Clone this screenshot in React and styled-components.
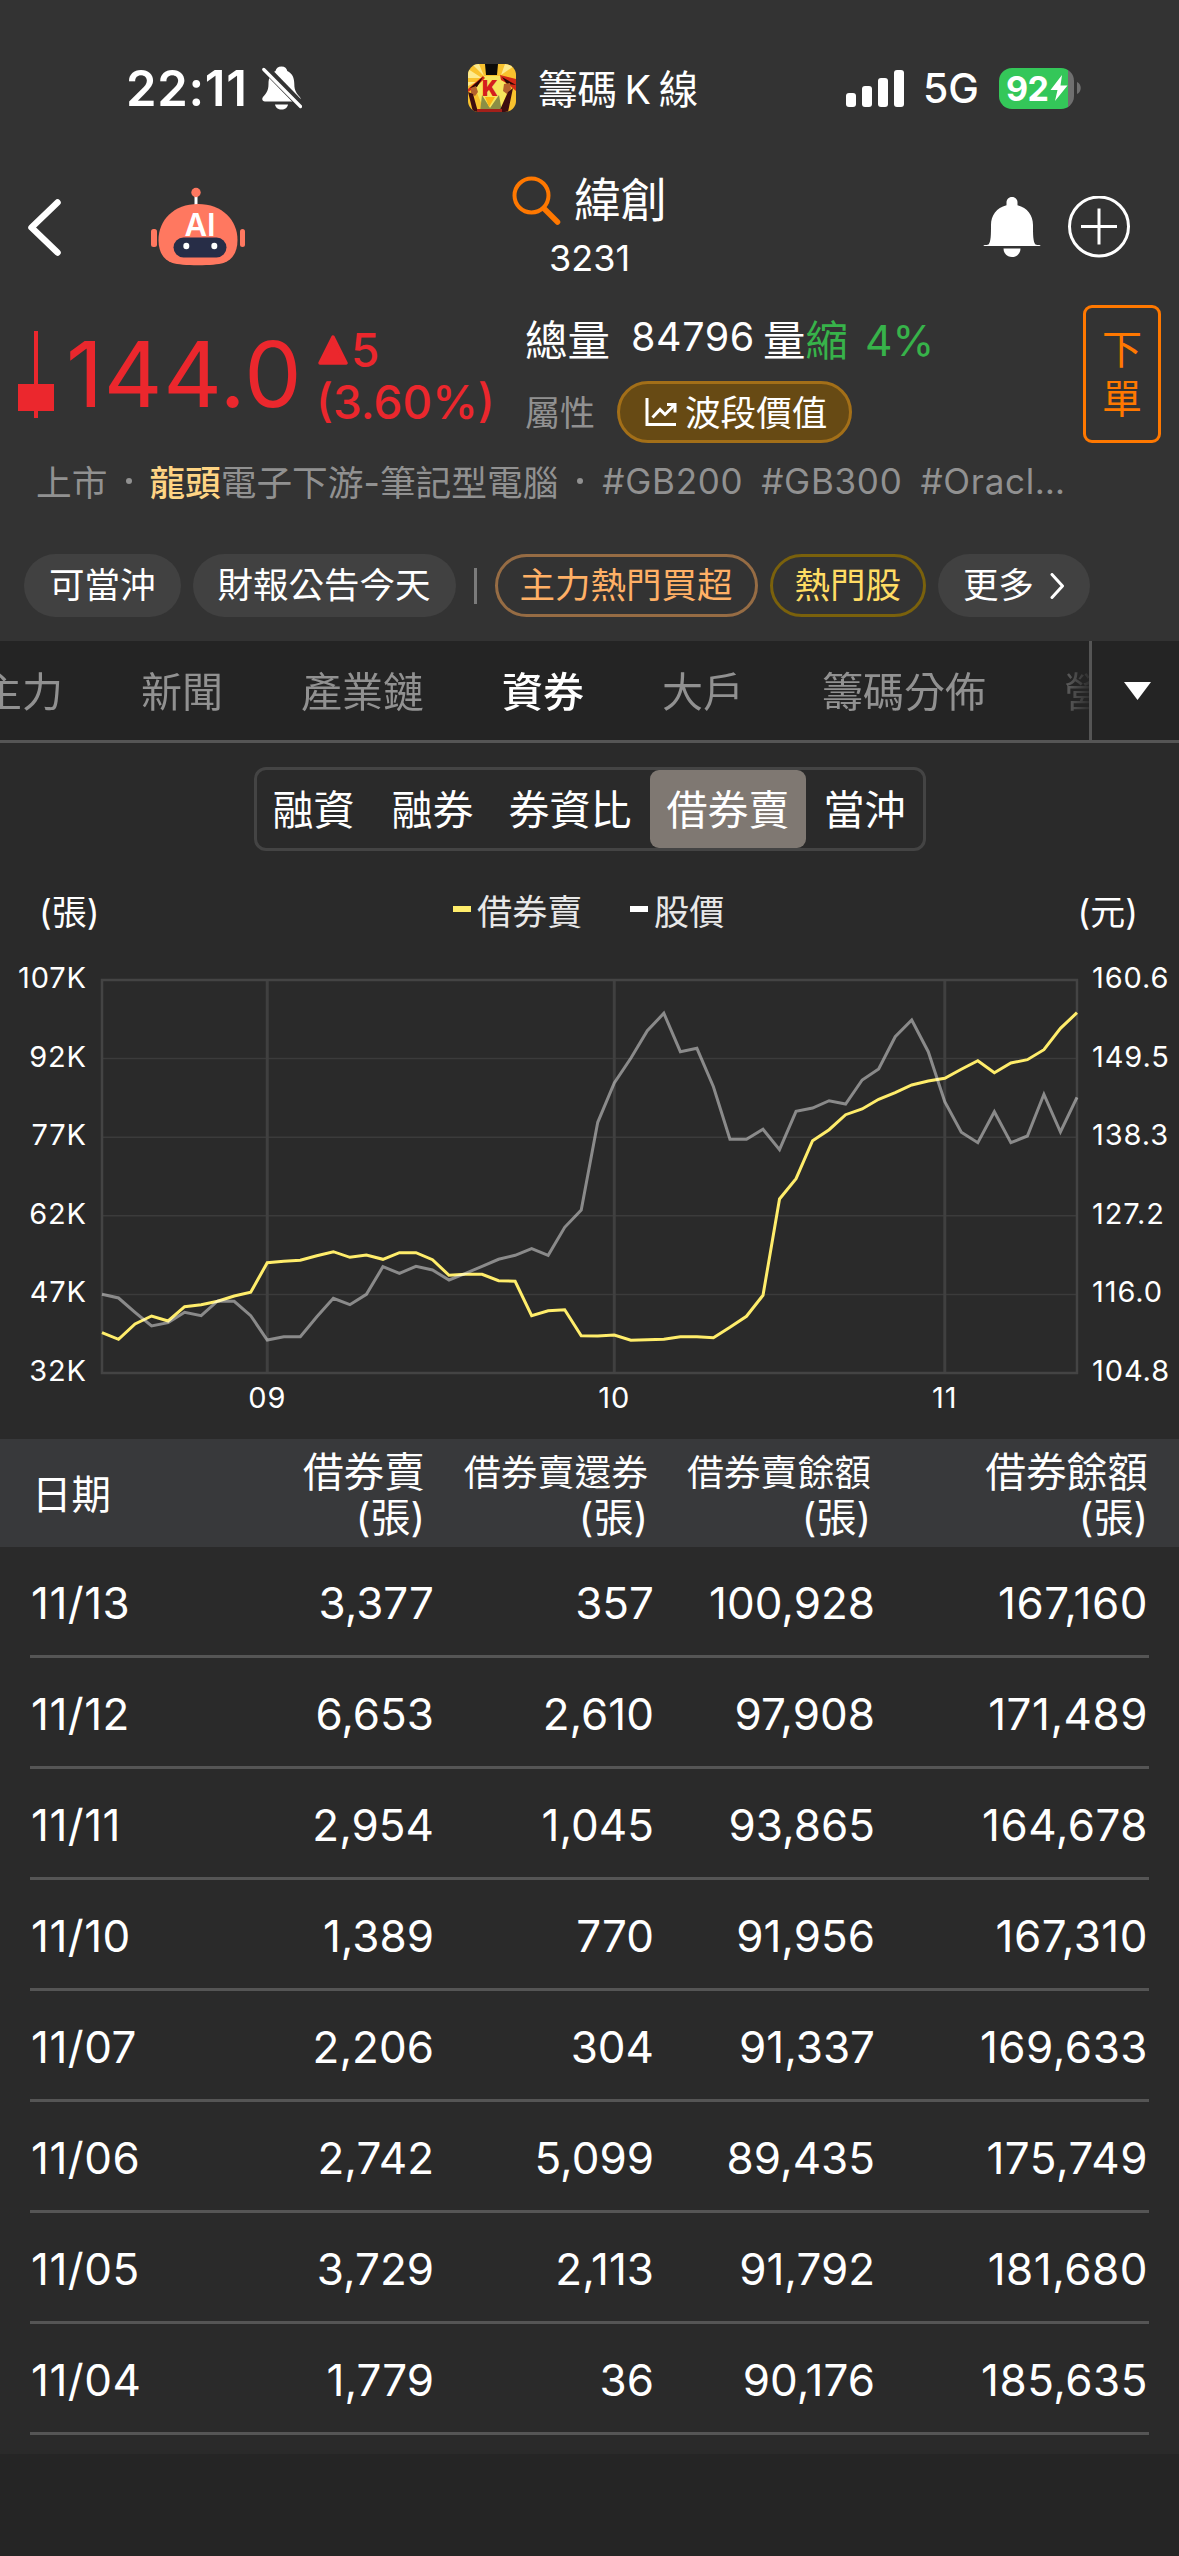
import styled, { createGlobalStyle } from "styled-components";

const GlobalStyle = createGlobalStyle`
    *{
        box-sizing: border-box;
    }

    body{
        margin: 0;
        background-color: #2a2a2a;
        color: #fff;
        font-family: Inter, "Noto Sans CJK TC", sans-serif;
        font-weight: 400;
        white-space: nowrap;
    }

    svg{
        display: block;
        flex-shrink: 0;
    }
`;

const Screen = styled.div`
    width: 1179px;
    height: 2556px;
    display: flex;
    flex-direction: column;
    overflow: hidden;
`;

const Header = styled.header`
    height: 641px;
    background-color: #333;
`;

/* ---------- status bar ---------- */

const StatusBar = styled.div`
    height: 176px;
    padding: 0 98px 0 126px;
    display: grid;
    grid-template-columns: 342px 378px 1fr;
    align-items: center;
`;

const StatusGroup = styled.div`
    display: flex;
    align-items: center;
    gap: ${({ $gap }) => $gap}px;
`;

const Clock = styled.span`
    width: 122px;
    font-size: 49px;
    font-weight: 600;
    letter-spacing: 0.7px;
`;

const AppName = styled.span`
    padding-bottom: 4px;
    font-size: 39.5px;
    word-spacing: -3.5px;
`;

const Network = styled.span`
    width: 55px;
    margin-left: -1px;
    margin-right: 1px;
    font-size: 41px;
    font-weight: 500;
    letter-spacing: 0;
`;

const Battery = styled.div`
    width: 75px;
    height: 41px;
    padding-left: 7px;
    display: flex;
    align-items: center;
    gap: 1px;
    border-radius: 13px;
    background: linear-gradient(to right, #34c759 69px, #6f6f6f 69px);
    font-size: 34px;
    font-weight: 700;
    letter-spacing: -0.5px;
`;

/* ---------- navigation ---------- */

const Nav = styled.nav`
    height: 114px;
    padding: 0 48px 0 28px;
    display: grid;
    grid-template-columns: 300px 1fr 300px;
    align-items: flex-start;
`;

const NavSide = styled.div`
    height: 102px;
    display: flex;
    align-items: center;
    justify-content: ${({ $end }) => ($end ? "flex-end" : "flex-start")};
    gap: ${({ $gap }) => $gap}px;
`;

const StockTitle = styled.div`
    padding-left: 20px;
    display: flex;
    flex-direction: column;
    align-items: center;
    gap: 10px;

    h1{
        margin: 0;
        height: 48px;
        display: flex;
        align-items: center;
        gap: 13px;
        font-size: 46.5px;
        font-weight: 400;
        line-height: 48px;
    }

    p{
        margin: 0;
        font-size: 36px;
        line-height: 48px;
    }
`;

/* ---------- quote ---------- */

const Quote = styled.section`
    height: 163px;
    padding: 0 18px;
    display: grid;
    grid-template-columns: 36px 264px 207px 1fr 78px;
    align-items: flex-start;
    color: #eb272d;
`;

const Candle = styled.svg`
    margin-top: 41px;
`;

const Price = styled.div`
    padding: 39px 0 0 12px;
    font-size: 91px;
    line-height: 91px;
    letter-spacing: 0.7px;
`;

const Change = styled.div`
    padding-top: 34px;
    display: flex;
    flex-direction: column;
    font-size: 46px;
    font-weight: 500;
    line-height: 52px;

    div{
        margin-left: -2px;
        display: flex;
        align-items: center;
    }

    div:first-child{
        margin-left: 0;
        gap: 3px;
    }
`;

const QuoteInfo = styled.div`
    padding-top: 20px;
    display: flex;
    flex-direction: column;
    gap: 11px;
    color: #fff;
`;

const Volume = styled.div`
    height: 60px;
    padding-bottom: 6px;
    display: flex;
    align-items: center;
    font-size: 42.5px;

    strong{
        width: 132px;
        margin-left: 21px;
        font-size: 39.5px;
        font-weight: 400;
        letter-spacing: 0.6px;
    }

    em{
        color: #37b34a;
        font-style: normal;
        word-spacing: 5px;
    }
`;

const Attribute = styled.div`
    display: flex;
    align-items: center;
    gap: 22px;
    color: #919191;
    font-size: 35px;

    span{
        padding-bottom: 4px;
    }
`;

const StyleBadge = styled.div`
    height: 62px;
    padding: 0 22px 0 25px;
    display: flex;
    align-items: center;
    gap: 8px;
    border: 3px solid #a36f18;
    border-radius: 31px;
    background-color: #674a14;
    color: #fff;
    font-size: 35.6px;
`;

const OrderButton = styled.button`
    height: 138px;
    margin: 15px 0 0;
    padding: 0 16px;
    border: 3px solid #ff7800;
    border-radius: 9px;
    background: none;
    color: #ff7800;
    font: inherit;
    font-size: 40px;
    line-height: 49px;
    white-space: normal;
`;

const Topics = styled.div`
    height: 58px;
    padding: 0 0 3px 36px;
    display: flex;
    align-items: center;
    color: #919191;
    font-size: 35.7px;

    b{
        color: #ffd584;
        font-weight: 500;
    }

    i{
        width: 6px;
        height: 6px;
        margin: 0 17px 0 19px;
        border-radius: 50%;
        background-color: #919191;
    }

    span{
        margin-right: 18px;
        font-size: 35px;
        letter-spacing: 0.7px;
    }

    i + span{
        margin-left: 2px;
    }
`;

/* ---------- chips ---------- */

const Chips = styled.div`
    padding: 43px 24px 0;
    display: flex;
    align-items: center;
    gap: 12px;
`;

const Chip = styled.button`
    height: 63px;
    padding: 0 ${({ $line }) => ($line ? 22 : 25)}px;
    display: flex;
    align-items: center;
    gap: 16px;
    border: ${({ $line }) => ($line ? `3px solid ${$line}` : "none")};
    border-radius: 32px;
    background-color: ${({ $line }) => ($line ? "transparent" : "#414141")};
    color: ${({ $color }) => $color || "#fff"};
    font: inherit;
    font-size: 35.5px;
    line-height: 57px;
`;

const ChipDivider = styled.span`
    width: 3px;
    height: 36px;
    margin: 0 6px;
    background-color: #7b7b7b;
`;

/* ---------- tabs ---------- */

const TabBar = styled.div`
    height: 102px;
    display: flex;
    border-bottom: 3px solid #555;
    background-color: #242424;
`;

const TabList = styled.div`
    width: 1089px;
    padding-bottom: 3px;
    display: flex;
    align-items: center;
    gap: 78px;
    overflow: hidden;
    mask-image: linear-gradient(to right, #000 1040px, rgba(0,0,0,0.1) 1089px);
`;

const Tab = styled.span`
    flex-shrink: 0;
    color: ${({ $active }) => ($active ? "#fff" : "#919191")};
    font-size: 41px;
    font-weight: ${({ $active }) => ($active ? 500 : 400)};

    &:first-child{
        margin-left: -19px;
    }
`;

const TabMore = styled.button`
    flex: 1;
    padding: 0 0 0 4px;
    display: flex;
    align-items: center;
    justify-content: center;
    border: none;
    border-left: 3px solid #555;
    background: none;
`;

/* ---------- segmented control ---------- */

const Segments = styled.div`
    width: 672px;
    height: 84px;
    margin: 24px 0 0 254px;
    display: grid;
    grid-template-columns: 113px 125px 155px 156px 1fr;
    border: 3px solid #444;
    border-radius: 12px;
`;

const Segment = styled.button`
    padding: 0 0 5px;
    border: none;
    border-radius: 9px;
    background-color: ${({ $active }) => ($active ? "#7f7872" : "transparent")};
    color: #fff;
    font: inherit;
    font-size: 41px;

    &:nth-child(3){
        padding-right: 5px;
    }
`;

/* ---------- chart ---------- */

const Legend = styled.div`
    height: 120px;
    padding: 0 41px 4px 39px;
    display: grid;
    grid-template-columns: 414px 177px 1fr auto;
    align-items: center;
    font-size: 35px;
`;

const LegendItem = styled.span`
    display: flex;
    align-items: center;
    gap: 6px;
    color: #e8e8e8;
    font-size: 35.2px;

    &::before{
        content: "";
        width: 18px;
        height: 6px;
        background-color: ${({ $color }) => $color};
    }
`;

const Chart = styled.svg`
    overflow: visible;
    font-size: 29px;
    letter-spacing: 0.9px;

    text{
        fill: #fff;
    }

    polyline{
        fill: none;
        stroke-width: 3;
    }
`;

/* ---------- table ---------- */

const TableHead = styled.div`
    height: 108px;
    padding: 0 31px 0 32px;
    display: grid;
    grid-template-columns: 154px 239px 223px 223px 1fr;
    align-items: center;
    background-color: #38393b;
`;

const DateHead = styled.div`
    padding-bottom: 4px;
    font-size: 39.5px;
`;

const HeadCell = styled.div`
    padding-top: 4px;
    display: flex;
    flex-direction: column;
    align-items: flex-end;
    font-size: 40px;
    line-height: 45px;

    span:first-child{
        font-size: ${({ $small }) => ($small ? 36.8 : 40.7)}px;
    }
`;

const Row = styled.div`
    height: 111px;
    margin: 0 30px;
    padding: 3px 1px 0 1px;
    display: grid;
    grid-template-columns: 180px 223px 220px 221px 1fr;
    align-items: center;
    border-bottom: 3px solid #555;
    font-size: 44px;

    span + span{
        text-align: right;
    }

    span:first-child,
    span:last-child{
        letter-spacing: 0.5px;
    }
`;

const BottomBar = styled.footer`
    margin-top: 19px;
    flex: 1;
    background-color: #252525;
`;

const tabs = ["主力", "新聞", "產業鏈", "資券", "大戶", "籌碼分佈", "營收"];

const segments = ["融資", "融券", "券資比", "借券賣", "當沖"];

const headers = [
    { label: "借券賣" },
    { label: "借券賣還券", small: true },
    { label: "借券賣餘額", small: true },
    { label: "借券餘額" },
];

const rows = [
    ["11/13", "3,377", "357", "100,928", "167,160"],
    ["11/12", "6,653", "2,610", "97,908", "171,489"],
    ["11/11", "2,954", "1,045", "93,865", "164,678"],
    ["11/10", "1,389", "770", "91,956", "167,310"],
    ["11/07", "2,206", "304", "91,337", "169,633"],
    ["11/06", "2,742", "5,099", "89,435", "175,749"],
    ["11/05", "3,729", "2,113", "91,792", "181,680"],
    ["11/04", "1,779", "36", "90,176", "185,635"],
];

// one entry per trading day, measured down from the top of the plot
const lending = [
    352.7, 359.3, 344, 336, 341, 326.7, 324.7, 321.3, 316, 312.3,
    282.7, 281.3, 280.3, 275.7, 271.7, 277.3, 275, 279.3, 272.7, 272.7,
    279.7, 295.3, 294.3, 294.3, 300.7, 301.3, 335.7, 330.7, 329.7, 355.7,
    356, 355, 360.3, 359.7, 359.3, 356.7, 356.7, 357.7, 347.3, 336.3,
    315.3, 219, 198.7, 160.7, 149.7, 134.7, 129, 119.3, 112.7, 105,
    101, 98.3, 89.3, 80.7, 92.7, 83, 79.7, 69.7, 48.3, 32.7,
];

const price = [
    314.3, 318, 332.3, 346, 342.7, 332.3, 335.7, 321, 321.3, 335.7,
    360, 356.7, 356.7, 336.7, 318.3, 324.7, 314.3, 286.7, 293.3, 286.3,
    290, 300, 293.3, 286.3, 279.3, 275.3, 268.7, 275.3, 247.3, 230,
    142.3, 103, 78.3, 50.7, 33.3, 71.7, 68.3, 106.7, 159.3, 159.3,
    149.3, 169.7, 131.3, 128, 120.7, 124, 100, 89, 56.7, 40,
    71.7, 121.7, 152.3, 162.7, 131.7, 162.7, 156, 114.3, 152, 117.3,
];

const LEFT = 102;
const TOP = 9;
const STEP = 16.525;
const PLOT_W = STEP * 59;
const PLOT_H = 393;

const leftTicks = ["107K", "92K", "77K", "62K", "47K", "32K"];
const rightTicks = ["160.6", "149.5", "138.3", "127.2", "116.0", "104.8"];
const months = [
    { label: "09", day: 10 },
    { label: "10", day: 31 },
    { label: "11", day: 51 },
];

const toPoints = (data) => data.map((y, i) => `${LEFT + i * STEP},${TOP + y}`).join(" ");

function LendingChart(){
    return (
        <Chart width="1179" height="468" viewBox="0 0 1179 468">
            {leftTicks.map((tick, i) => {
                const y = TOP + (PLOT_H / 5) * i;
                return (
                    <g key={tick}>
                        {i > 0 && i < 5 && <line x1={LEFT} x2={LEFT + PLOT_W} y1={y} y2={y} stroke="#3b3b3b" strokeWidth="1.5" />}
                        <text x="87" y={y + 8} textAnchor="end">{tick}</text>
                        <text x="1092" y={y + 8}>{rightTicks[i]}</text>
                    </g>
                );
            })}
            {months.map(({ label, day }) => (
                <g key={label}>
                    <line x1={LEFT + day * STEP} x2={LEFT + day * STEP} y1={TOP} y2={TOP + PLOT_H} stroke="#404040" strokeWidth="3" />
                    <text x={LEFT + day * STEP} y="437" textAnchor="middle">{label}</text>
                </g>
            ))}
            <rect x={LEFT} y={TOP} width={PLOT_W} height={PLOT_H} fill="none" stroke="#444" strokeWidth="2.5" />
            <polyline points={toPoints(lending)} stroke="#ffed6b" />
            <polyline points={toPoints(price)} stroke="rgba(255,255,255,0.45)" />
        </Chart>
    );
}

function MutedIcon(){
    return (
        <svg width="40" height="44" viewBox="0 0 40 44">
            <path d="M19.5 0.5c-3.5 0-5.5 2-6 4.5C8.5 7.3 6.5 12 6.5 18c0 7-2.5 9.5-5.500 13-1.600 2-.5 4.500 2 4.500h32.500c3 0 4-2.500 2.300-4.500-3-3.500-5.500-6-5.500-13 0-6-2-10.700-7-13-.5-2.500-2.300-4.500-5.800-4.500z" fill="#fff" />
            <path d="M13 38.5h13c-.5 3-3 5-6.5 5s-6-2-6.5-5z" fill="#fff" />
            <path d="M1 0L41 41" stroke="#333" strokeWidth="8" />
            <path d="M1.8 3.5L38.5 40.5" stroke="#fff" strokeWidth="3.2" strokeLinecap="round" />
        </svg>
    );
}

function AppIcon(){
    return (
        <svg width="48" height="48" viewBox="0 0 48 48">
            <clipPath id="appIcon"><rect width="48" height="48" rx="11" /></clipPath>
            <g clipPath="url(#appIcon)">
                <rect width="48" height="48" fill="#f9c22e" />
                <path d="M0 14L14 14 0 5zM4 0l12 12L11 0zM37 0l-4 11L46 2zM0 22v-4l8 0z" fill="#fdea8d" />
                <path d="M16 12h17l8 12-9 22H16L7 24z" fill="#f7e65c" />
                <path d="M14 31l8 13 9-13 3 17H12z" fill="#8c8f45" />
                <path d="M17 33h10l-6 10z" fill="#fcb514" />
                <path d="M17 0h13l-1 11H18z" fill="#0c0b08" />
                <path d="M0 25L15 12l2 2-9 9-8 5zM32 11l16 4v12l-8-7-7-4z" fill="#d42a17" />
                <path d="M2 24l13-11-6 10zM34 13l14 8-9-1z" fill="#2a0907" />
                <path d="M3 24l5-2 2 6-3 4-4-2zM36 20l6-1 1 6-4 5-4-3z" fill="#b5622c" />
                <path d="M0 28l5 2 5 18H5zM40 28l5-4-5 24h-9z" fill="#3d0d10" />
                <path d="M9 45h25v3H9z" fill="#a3201a" />
                <text x="22" y="31.5" textAnchor="middle" fontSize="21" fontWeight="900" fill="#d4201d">K</text>
            </g>
        </svg>
    );
}

function Signal(){
    return (
        <svg width="58" height="37" viewBox="0 0 58 37" fill="#fff">
            {[14, 21, 29, 37].map((h, i) => <rect key={h} x={i * 16} y={37 - h} width="10" height={h} rx="3" />)}
        </svg>
    );
}

function Robot(){
    return (
        <svg width="94" height="80" viewBox="0 0 94 80">
            <path d="M45 8v10" stroke="#fff" strokeWidth="3" />
            <circle cx="45" cy="5.5" r="4.7" fill="#ff7860" />
            <rect x="0" y="42" width="6" height="18" rx="2.5" fill="#ff7860" />
            <rect x="89" y="42" width="5" height="18" rx="2.5" fill="#ff7860" />
            <path d="M47 17c24 0 39.5 16 39.5 36 0 12-5 20-14 23-5 1.500-14 2.200-25.500 2.200s-20.500-.7-25.500-2.200c-9-3-14-11-14-23 0-20 15.500-36 39.500-36z" fill="#ff7860" />
            <text x="49" y="48.5" textAnchor="middle" fontSize="31" fontWeight="600" fill="#fff">AI</text>
            <rect x="22.5" y="50.5" width="53" height="20" rx="10" fill="#272d47" />
            <ellipse cx="35.3" cy="59" rx="3" ry="3.3" fill="#fff" />
            <ellipse cx="63.3" cy="59" rx="3" ry="3.3" fill="#fff" />
        </svg>
    );
}

export default function App(){
    return (
        <Screen>
            <GlobalStyle />
            <Header>
                <StatusBar>
                    <StatusGroup $gap={14}>
                        <Clock>22:11</Clock>
                        <MutedIcon />
                    </StatusGroup>
                    <StatusGroup $gap={22}>
                        <AppIcon />
                        <AppName>籌碼 K 線</AppName>
                    </StatusGroup>
                    <StatusGroup $gap={20}>
                        <Signal />
                        <Network>5G</Network>
                        <StatusGroup $gap={3}>
                            <Battery>
                                92
                                <svg width="18" height="26" viewBox="0 0 18 26"><path d="M12 0L0.500 15h7L5 26 17.500 10.500h-7z" fill="#fff" /></svg>
                            </Battery>
                            <svg width="4" height="12" viewBox="0 0 4 12"><path d="M0 0c5 2 5 10 0 12z" fill="#6f6f6f" /></svg>
                        </StatusGroup>
                    </StatusGroup>
                </StatusBar>

                <Nav>
                    <NavSide $gap={90}>
                        <svg width="33" height="57" viewBox="0 0 33 57"><path d="M29.500 3.500L3.500 28.500l26 25" fill="none" stroke="#fff" strokeWidth="6.500" strokeLinecap="round" strokeLinejoin="round" /></svg>
                        <Robot />
                    </NavSide>
                    <StockTitle>
                        <h1>
                            <svg width="49" height="49" viewBox="0 0 49 49" fill="none" stroke="#ff7800" strokeLinecap="round">
                                <circle cx="19.500" cy="19.500" r="17" strokeWidth="4" />
                                <path d="M32.500 33L45.500 46" strokeWidth="5.500" />
                            </svg>
                            緯創
                        </h1>
                        <p>3231</p>
                    </StockTitle>
                    <NavSide $end $gap={26}>
                        <svg width="58" height="60" viewBox="0 0 58 60" fill="#fff">
                            <path d="M29 0c-3.500 0-5.500 2.500-5.500 5.500v2.700C13.500 11 8 18 8 28c0 9 0 17-2.500 19.500C4 48.500.5 47 .5 49h57c0-2-3.500-.5-5-1.500C50 45 50 37 50 28c0-10-5.500-17-15.500-19.800V5.500C34.500 2.500 32.500 0 29 0z" />
                            <path d="M20.500 51.500h17c0 5-3.800 8.500-8.500 8.500s-8.500-3.500-8.500-8.500z" />
                        </svg>
                        <svg width="64" height="62" viewBox="0 0 64 62" fill="none" stroke="#fff" strokeWidth="3">
                            <circle cx="32" cy="30.500" r="29.500" />
                            <path d="M32 12.500v36M14 30.500h36" />
                        </svg>
                    </NavSide>
                </Nav>

                <Quote>
                    <Candle width="36" height="87" viewBox="0 0 36 87" fill="#eb272d">
                        <rect x="16" width="4" height="87" />
                        <rect y="53" width="36" height="27" />
                    </Candle>
                    <Price>144.0</Price>
                    <Change>
                        <div>
                            <svg width="30" height="30" viewBox="0 0 30 30"><path d="M15 2L28 28H2z" fill="#eb272d" stroke="#eb272d" strokeWidth="3.500" strokeLinejoin="round" /></svg>
                            5
                        </div>
                        <div>(3.60%)</div>
                    </Change>
                    <QuoteInfo>
                        <Volume>總量<strong>84796</strong>量<em>縮 4%</em></Volume>
                        <Attribute>
                            <span>屬性</span>
                            <StyleBadge>
                                <svg width="32" height="30" viewBox="0 0 32 30" fill="none" stroke="#fff" strokeWidth="3">
                                    <path d="M2 1v26.500h29" />
                                    <path d="M7.500 20.500l7.500-8 5 5L29.500 8" />
                                    <path d="M22 7.500h8v8" />
                                </svg>
                                <span>波段價值</span>
                            </StyleBadge>
                        </Attribute>
                    </QuoteInfo>
                    <OrderButton>下單</OrderButton>
                </Quote>

                <Topics>
                    上市<i /><b>龍頭</b>電子下游-筆記型電腦<i />
                    <span>#GB200</span>
                    <span>#GB300</span>
                    <span>#Oracl…</span>
                </Topics>

                <Chips>
                    <Chip>可當沖</Chip>
                    <Chip>財報公告今天</Chip>
                    <ChipDivider />
                    <Chip $line="#966c44" $color="#ffb066">主力熱門買超</Chip>
                    <Chip $line="#7a610c" $color="#ffdc64">熱門股</Chip>
                    <Chip>
                        更多
                        <svg width="15" height="26" viewBox="0 0 15 26"><path d="M2 1.500L12.500 13 2 24.500" fill="none" stroke="#fff" strokeWidth="3" strokeLinecap="round" strokeLinejoin="round" /></svg>
                    </Chip>
                </Chips>
            </Header>

            <TabBar>
                <TabList>
                    {tabs.map((tab) => <Tab key={tab} $active={tab === "資券"}>{tab}</Tab>)}
                </TabList>
                <TabMore>
                    <svg width="27" height="18" viewBox="0 0 27 18"><path d="M0 0h27L13.500 18z" fill="#fff" /></svg>
                </TabMore>
            </TabBar>

            <Segments>
                {segments.map((item) => <Segment key={item} $active={item === "借券賣"}>{item}</Segment>)}
            </Segments>

            <Legend>
                <span>(張)</span>
                <LegendItem $color="#ffed6b">借券賣</LegendItem>
                <LegendItem $color="#fff">股價</LegendItem>
                <span>(元)</span>
            </Legend>

            <LendingChart />

            <TableHead>
                <DateHead>日期</DateHead>
                {headers.map(({ label, small }) => (
                    <HeadCell key={label} $small={small}>
                        <span>{label}</span>
                        <span>(張)</span>
                    </HeadCell>
                ))}
            </TableHead>
            {rows.map((row) => (
                <Row key={row[0]}>
                    {row.map((cell, i) => <span key={i}>{cell}</span>)}
                </Row>
            ))}
            <BottomBar />
        </Screen>
    );
}
